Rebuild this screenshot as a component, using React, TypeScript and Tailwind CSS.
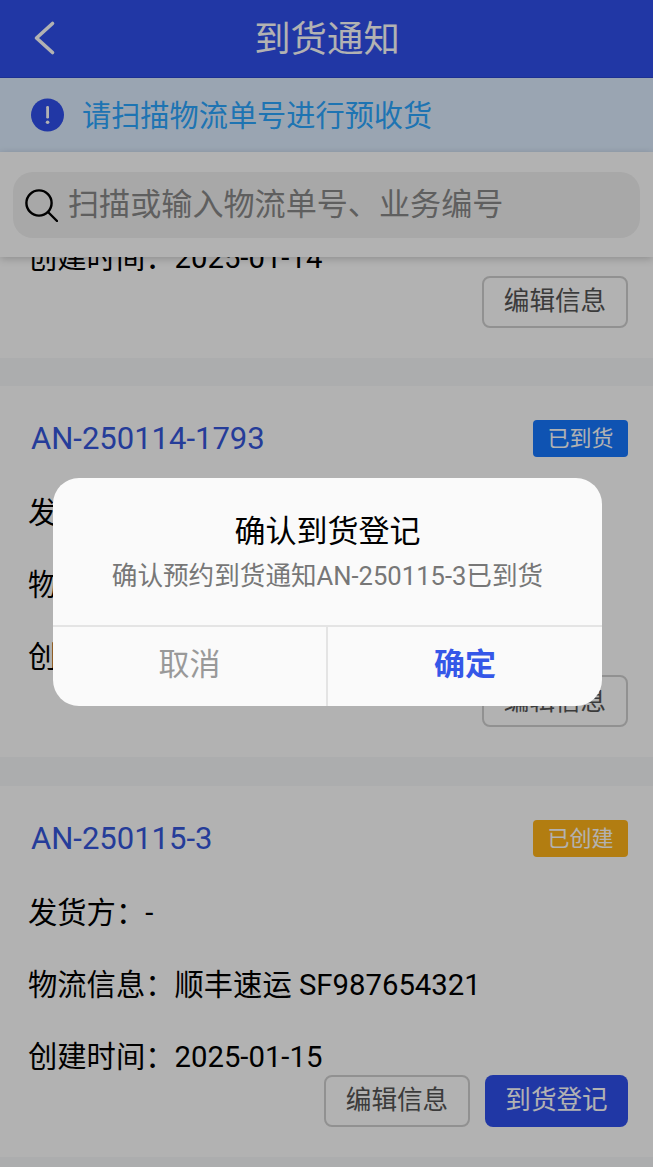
const font = "font-['Roboto','Noto_Sans_CJK_SC',sans-serif]";
const colon = "\uFF1A";

interface NoticeProps {
  code: string;
  status: string;
  statusClass: string;
  sender: string;
  logistics: string;
  created: string;
  canRegister?: boolean;
}

const notices: NoticeProps[] = [
  {
    code: "AN-250114-1794",
    status: "已到货",
    statusClass: "bg-[#1677ff]",
    sender: "-",
    logistics: "顺丰速运 SF123456789",
    created: "2025-01-14",
  },
  {
    code: "AN-250114-1793",
    status: "已到货",
    statusClass: "bg-[#1677ff]",
    sender: "-",
    logistics: "顺丰速运 SF123456780",
    created: "2025-01-14",
  },
  {
    code: "AN-250115-3",
    status: "已创建",
    statusClass: "bg-[#ffb319]",
    sender: "-",
    logistics: "顺丰速运 SF987654321",
    created: "2025-01-15",
    canRegister: true,
  },
];

const NoticeCard = ({ code, status, statusClass, sender, logistics, created, canRegister }: NoticeProps) => {
  return (
    <div className="bg-white pt-[34px] pb-[30px] pl-[28px] pr-[25px]">
      <div className="flex h-[37px] items-center justify-between">
        <p className="pl-[3px] text-[31px] leading-none text-[#3557dc]">{code}</p>
        <span className={`flex h-[37px] w-[95px] items-center justify-center rounded-[4px] text-[22px] text-white ${statusClass}`}>
          {status}
        </span>
      </div>
      <div className="mt-[37px] flex flex-col gap-[34px] text-[29.3px] leading-[38px] text-black">
        <p>发货方{colon}{sender}</p>
        <p>物流信息{colon}{logistics}</p>
        <p>创建时间{colon}{created}</p>
      </div>
      <div className="-mt-[1px] flex justify-end gap-[15px]">
        <button className="h-[52px] w-[146px] rounded-[8px] border-2 border-[#d0d0d0] bg-white text-[25.6px] text-[#555]">
          编辑信息
        </button>
        {canRegister && (
          <button className="h-[52px] w-[143px] rounded-[8px] bg-[#2f50ed] text-[25.6px] text-white">到货登记</button>
        )}
      </div>
    </div>
  );
};

export default function App() {
  return (
    <div className={`relative flex h-[1167px] w-[653px] flex-col overflow-hidden bg-[#f7f8fa] ${font}`}>
      <header className="relative flex h-[78px] items-center justify-center border-b border-[#2a46d2] bg-[#3050ed] pl-[1px] pt-[3px]">
        <svg className="absolute left-[33px] top-[20px]" width="24" height="36" viewBox="0 0 24 36" fill="none">
          <path d="M19.5 3.5 L3.5 18 L19.5 32.5" stroke="white" strokeWidth="3.6" strokeLinecap="round" strokeLinejoin="round" />
        </svg>
        <h1 className="text-[36.4px] font-normal text-white">到货通知</h1>
      </header>

      <div className="flex h-[74px] items-center gap-[18px] bg-[#ddedff] pl-[31px] pt-[3px]">
        <svg className="-mt-[3px]" width="33" height="34" viewBox="0 0 33 34">
          <circle cx="16.5" cy="17" r="16.5" fill="#3050ed" />
          <rect x="15.2" y="8" width="2.8" height="12.5" rx="1.2" fill="white" />
          <circle cx="16.6" cy="24.3" r="1.8" fill="white" />
        </svg>
        <p className="text-[29.2px] text-[#2ba6ff]">请扫描物流单号进行预收货</p>
      </div>

      <div className="relative z-10 h-[105px] bg-white px-[13px] pt-[20px] shadow-[0_2px_8px_rgba(0,0,0,0.2)]">
        <div className="flex h-[66px] items-center gap-[10px] rounded-[20px] bg-[#f1f1f1] pl-[12px]">
          <svg width="33" height="33" viewBox="0 0 33 33" fill="none" stroke="black" strokeWidth="2.4" strokeLinecap="round">
            <circle cx="14" cy="14" r="12.6" />
            <path d="M23.5 23.5 L32 32" />
          </svg>
          <span className="text-[31.1px] text-[#888]">扫描或输入物流单号、业务编号</span>
        </div>
      </div>

      <main className="flex-1 overflow-hidden">
        <div className="-mt-[270.5px] flex flex-col gap-[28.5px]">
          {notices.map((notice) => (
            <NoticeCard key={notice.code} {...notice} />
          ))}
        </div>
      </main>

      <div className="absolute inset-0 z-20 bg-black/30" />

      <div className="absolute left-[53px] top-[478px] z-30 flex h-[228px] w-[549px] flex-col overflow-hidden rounded-[26px] bg-[#fafafa]">
        <div className="h-[147px] pt-[32px] text-center">
          <p className="text-[31px] leading-[44px] text-black">确认到货登记</p>
          <p className="text-[25.6px] leading-[45px] text-[#777]">确认预约到货通知AN-250115-3已到货</p>
        </div>
        <div className="flex flex-1 border-t-2 border-[#e4e4e4]">
          <button className="w-[275px] border-r-2 border-[#e4e4e4] pb-[2px] text-[31px] text-[#999]">取消</button>
          <button className="flex-1 pb-[2px] text-[31px] font-bold text-[#3557e8]">确定</button>
        </div>
      </div>
    </div>
  );
}
